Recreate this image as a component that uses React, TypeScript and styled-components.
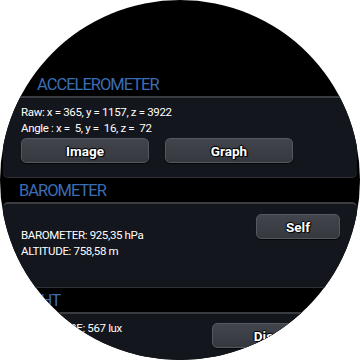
import styled, { createGlobalStyle } from 'styled-components';

const GlobalStyle = createGlobalStyle`
  html, body {
    margin: 0;
    padding: 0;
    background: #ffffff;
  }
  body {
    font-family: Roboto, "Liberation Sans", sans-serif;
  }
`;

const Screen = styled.div`
  width: 360px;
  height: 360px;
  border-radius: 50%;
  overflow: hidden;
  background: #000000;
  padding-top: 72px;
  box-sizing: border-box;
`;

const SectionHeader = styled.div<{ $indent: number }>`
  box-sizing: border-box;
  height: 24px;
  padding: 1px 0 0 ${(p) => p.$indent}px;
  line-height: 24px;
  font-size: 16.5px;
  letter-spacing: -1px;
  color: #3b6db4;
`;

const Panel = styled.div<{ $height: number }>`
  box-sizing: border-box;
  height: ${(p) => p.$height}px;
  margin: 0 3px;
  padding: 0 17px 0 18px;
  background: #13161c;
  border-top: 2px solid #3a3c41;
  border-bottom: 1px solid #303237;
  border-radius: 5px;
`;

const Lines = styled.div<{ $top: number }>`
  padding-top: ${(p) => p.$top}px;
  font-size: 11.5px;
  line-height: 15.5px;
  letter-spacing: -0.35px;
  color: #ffffff;
  white-space: pre;
`;

const ButtonRow = styled.div`
  display: flex;
  gap: 16px;
  margin-top: 2px;
`;

const SplitRow = styled.div`
  display: flex;
  justify-content: space-between;
  align-items: flex-start;
`;

const Button = styled.div<{ $width: number; $top?: number }>`
  box-sizing: border-box;
  width: ${(p) => p.$width}px;
  height: 25px;
  margin-top: ${(p) => p.$top ?? 0}px;
  border: 1px solid #55585e;
  border-radius: 5px;
  background: linear-gradient(#42454c, #35383e);
  box-shadow: 0 1px 1px rgba(0, 0, 0, 0.8);
  display: flex;
  align-items: center;
  justify-content: center;
  font-size: 13.5px;
  font-weight: bold;
  color: #ffffff;
  text-shadow: 1px 1px 1px #000, -1px 0 1px #000, 0 -1px 1px #000, 1px 0 1px #000;
`;

export default function App() {
  return (
    <>
      <GlobalStyle />
      <Screen>
        <SectionHeader $indent={37}>ACCELEROMETER</SectionHeader>
        <Panel $height={82}>
          <Lines $top={7}>
            {'Raw: x = 365, y = 1157, z = 3922\nAngle : x =  5, y =  16, z =  72'}
          </Lines>
          <ButtonRow>
            <Button $width={128}>Image</Button>
            <Button $width={128}>Graph</Button>
          </ButtonRow>
        </Panel>

        <SectionHeader $indent={19}>BAROMETER</SectionHeader>
        <Panel $height={86}>
          <SplitRow>
            <Lines $top={24}>{'BAROMETER: 925,35 hPa\nALTITUDE: 758,58 m'}</Lines>
            <Button $width={84} $top={10}>
              Self
            </Button>
          </SplitRow>
        </Panel>

        <SectionHeader $indent={19}>LIGHT</SectionHeader>
        <Panel $height={86}>
          <SplitRow>
            <Lines $top={7}>{'LUMINANCE: 567 lux'}</Lines>
            <Button $width={128} $top={9}>
              Display
            </Button>
          </SplitRow>
        </Panel>
      </Screen>
    </>
  );
}
